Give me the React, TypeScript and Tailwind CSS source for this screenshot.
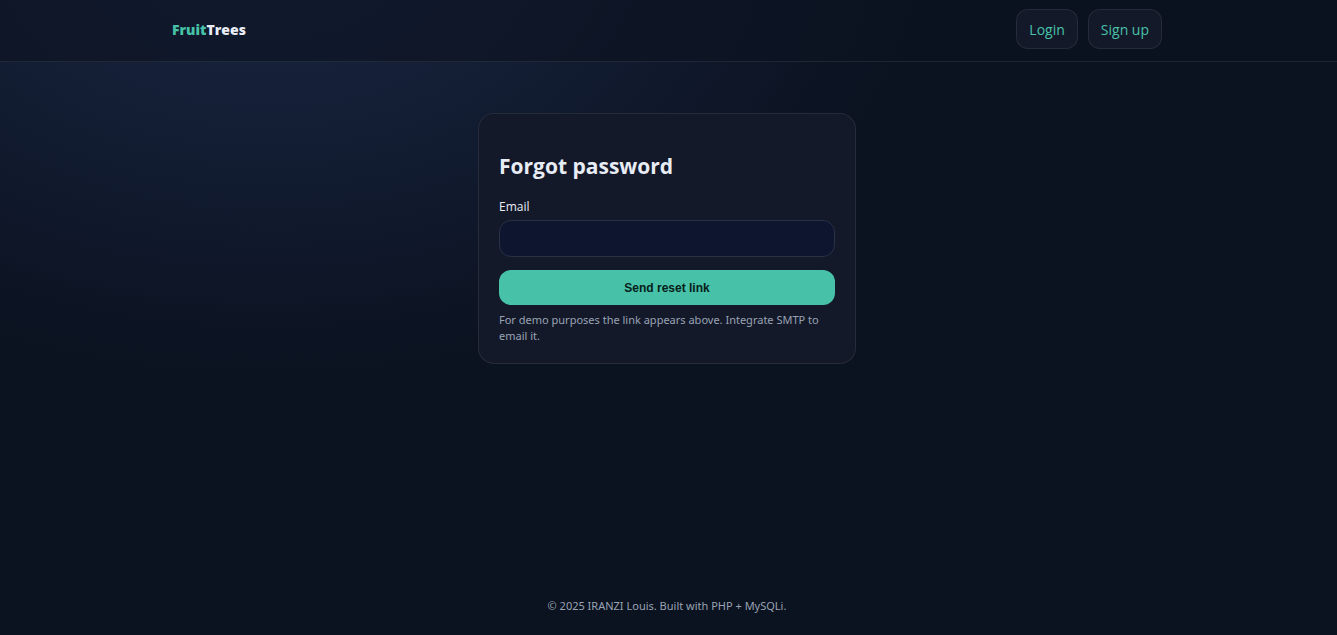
const navLinks = [
  { label: "Login", href: "#login" },
  { label: "Sign up", href: "#signup" },
];

export default function App() {
  return (
    <div className="flex min-h-screen flex-col bg-[#0b1220] bg-[radial-gradient(1200px_800px_at_20%_-10%,#1a2744,transparent_55%)] font-['Open_Sans','Noto_Sans',sans-serif] text-[#e8ecf4]">
      <header className="border-b border-white/8 bg-[#0b1220]/60 pr-[3px]">
        <div className="mx-auto flex h-[61px] w-full max-w-[990px] items-center justify-between pb-1">
          <a href="#home" className="pt-0.5 text-[14px] font-extrabold">
            <span className="text-[#47c2a8]">Fruit</span>Trees
          </a>
          <nav className="flex gap-2.5">
            {navLinks.map((link) => (
              <a
                key={link.label}
                href={link.href}
                className="flex h-10 items-center rounded-[12px] border border-white/8 bg-[#14192a] px-3 pt-0.5 text-[14px] text-[#47c2a8]"
              >
                {link.label}
              </a>
            ))}
          </nav>
        </div>
      </header>

      <main className="flex-1 pt-[51px] pr-[3px]">
        <form className="mx-auto flex w-full max-w-[378px] flex-col rounded-[16px] border border-white/8 bg-[#14192a] px-5 pt-9 pb-[19px]">
          <h1 className="text-[21px] leading-8 font-bold">
            Forgot password
          </h1>
          <label htmlFor="email" className="mt-[17px] text-[12px] leading-4">
            Email
          </label>
          <input
            id="email"
            type="email"
            required
            className="mt-[5px] h-[37px] w-full rounded-[12px] border border-[#2a3145] bg-[#0e152e] px-3 text-[13px] outline-none"
          />
          <button
            type="submit"
            className="mt-[13px] h-[35px] w-full rounded-[12px] bg-[#47c2a8] font-['Liberation_Sans',sans-serif] text-[12px] font-bold text-[#06201a]"
          >
            Send reset link
          </button>
          <p className="mt-[7px] font-['Noto_Sans',sans-serif] text-[11px] leading-4 text-[#99a3b3]">
            For demo purposes the link appears above. Integrate SMTP to email it.
          </p>
        </form>
      </main>

      <footer className="pr-[3px] pb-[21px] text-center font-['Noto_Sans',sans-serif] text-[11px] leading-4 text-[#99a3b3]">
        © 2025 IRANZI Louis. Built with PHP + MySQLi.
      </footer>
    </div>
  );
}
